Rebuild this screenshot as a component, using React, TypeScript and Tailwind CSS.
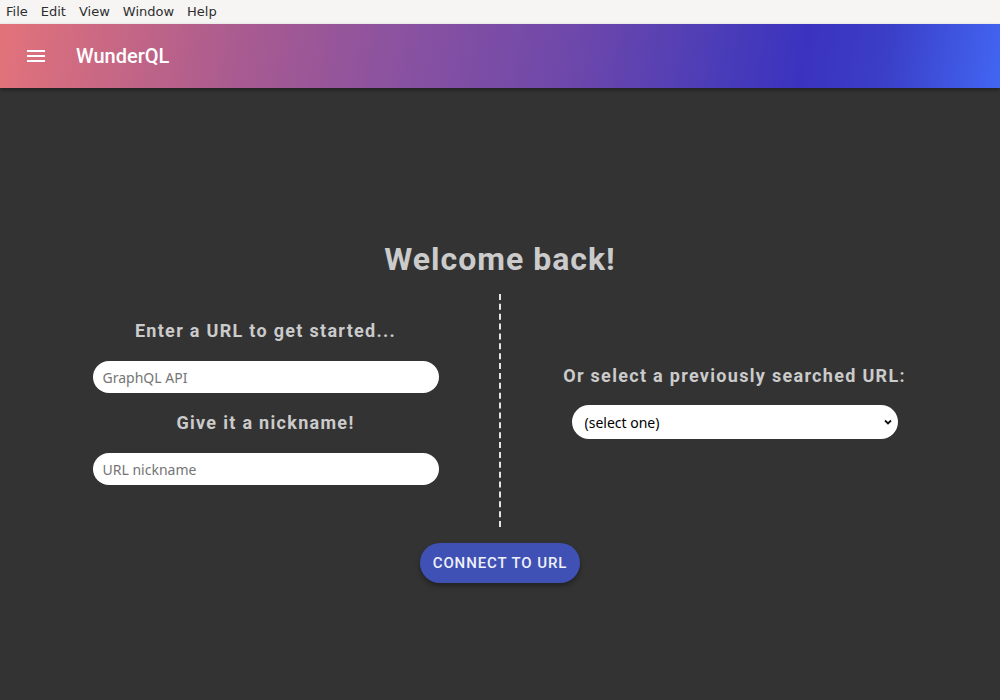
import React from 'react';

const MenuBar: React.FC = () => {
  const items = ['File', 'Edit', 'View', 'Window', 'Help'];
  return (
    <div className="h-6 bg-[#f6f5f4] flex items-center gap-[13px] px-[6px] font-['DejaVu_Sans',sans-serif] text-[13px] text-[#2e2e2e]">
      {items.map((item) => (
        <span key={item}>{item}</span>
      ))}
    </div>
  );
};

const Header: React.FC = () => (
  <div className="relative z-10 h-16 flex items-center px-6 shadow-[0_2px_4px_rgba(0,0,0,0.35)] bg-[linear-gradient(100deg,#e3737a_0%,#a95b90_24%,#8a52a0_40%,#6c47ab_58%,#4a3cb8_72%,#3b33c0_80%,#3b3ec6_88%,#4266f3_100%)]">
    <svg width="24" height="24" viewBox="0 0 24 24" className="text-white">
      <path d="M3 18h18v-2H3v2zm0-5h18v-2H3v2zm0-7v2h18V6H3z" fill="currentColor" />
    </svg>
    <h1 className="ml-7 text-white text-[20px] font-medium font-['Roboto',sans-serif]">WunderQL</h1>
  </div>
);

const Welcome: React.FC = () => {
  return (
    <div className="flex-1 bg-[#333333] font-['Roboto',sans-serif] flex flex-col items-center pt-[151px]">
      <h2 className="text-[32px] font-bold text-[#cbcbcb] tracking-[1px] leading-[40px]">Welcome back!</h2>

      <div className="w-full flex px-8 mt-[15px]">
        {/* left: new url */}
        <div className="flex-1 flex flex-col items-center pt-[25px] pb-[42px]">
          <h3 className="text-[18px] font-bold text-[#cbcbcb] tracking-[1.3px] leading-[24px]">Enter a URL to get started...</h3>
          <input
            className="mt-[18px] w-[346px] h-[32px] rounded-full bg-white px-[10px] text-[14px] font-['Noto_Sans',sans-serif] text-black placeholder:text-[#757575] outline-none"
            placeholder="GraphQL API"
          />
          <h3 className="mt-[18px] text-[18px] font-bold text-[#cbcbcb] tracking-[1.3px] leading-[24px]">Give it a nickname!</h3>
          <input
            className="mt-[18px] w-[346px] h-[32px] rounded-full bg-white px-[10px] text-[14px] font-['Noto_Sans',sans-serif] text-black placeholder:text-[#757575] outline-none"
            placeholder="URL nickname"
          />
        </div>

        <div className="border-l-2 border-dashed border-[#e6e6e6]" />

        {/* right: previous urls */}
        <div className="flex-1 flex flex-col items-center justify-center pb-[18px]">
          <h3 className="text-[18px] font-bold text-[#cbcbcb] tracking-[1.3px] leading-[24px]">Or select a previously searched URL:</h3>
          <div className="relative mt-[17px] w-[326px] h-[34px]">
            <select className="appearance-none w-full h-full rounded-full bg-white pl-[13px] pr-8 text-[14px] font-['Noto_Sans',sans-serif] text-black outline-none">
              <option>(select one)</option>
            </select>
            <svg width="10" height="10" viewBox="0 0 10 10" className="absolute right-[5px] top-[12px] pointer-events-none">
              <path d="M2 3.5 L5 6.5 L8 3.5" stroke="#111" strokeWidth="1.8" fill="none" />
            </svg>
          </div>
        </div>
      </div>

      <button className="mt-[16px] h-10 px-[13px] rounded-full bg-[#3f51b5] text-[#eef0fa] text-[15px] font-medium uppercase tracking-[0.9px] shadow-[0_3px_5px_rgba(0,0,0,0.35)]">
        Connect to URL
      </button>
    </div>
  );
};

export default function App() {
  return (
    <div className="w-[1000px] h-[700px] flex flex-col overflow-hidden bg-[#333333]">
      <MenuBar />
      <Header />
      <Welcome />
    </div>
  );
}
